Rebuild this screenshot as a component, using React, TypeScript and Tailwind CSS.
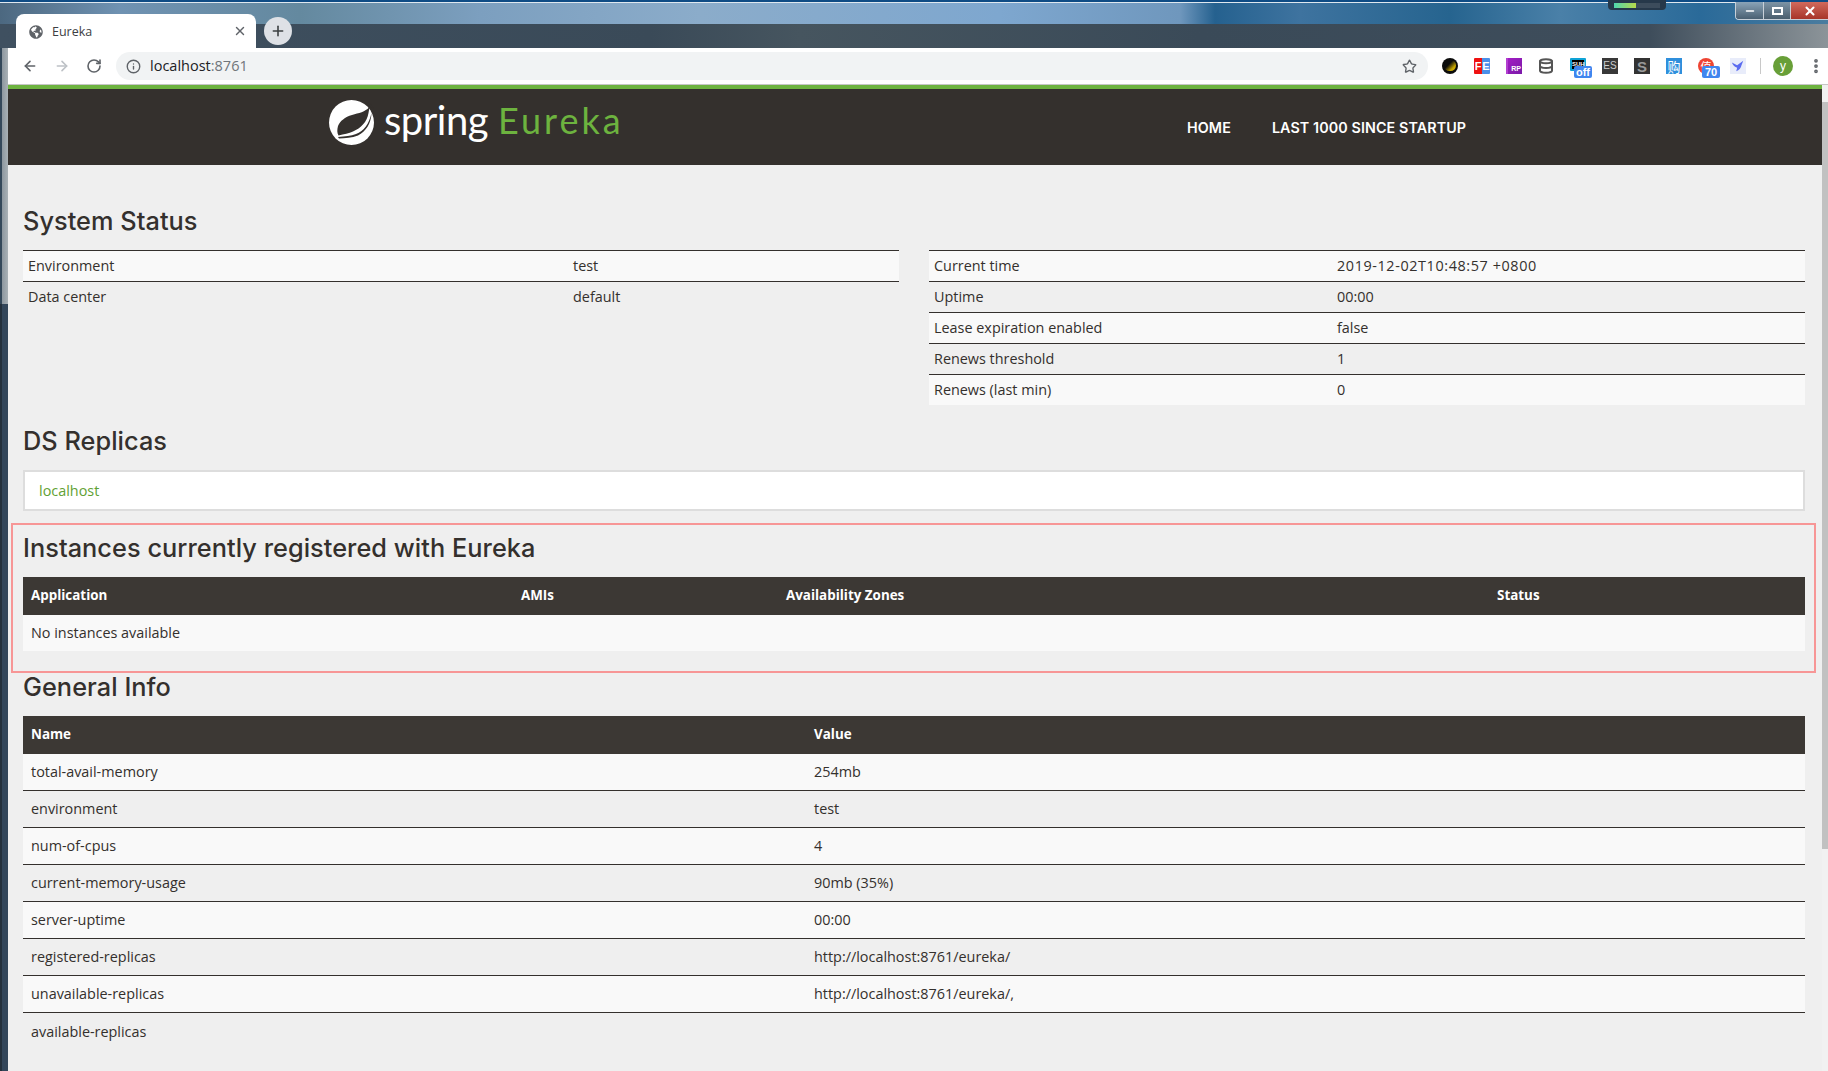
import React from "react";
import { ArrowLeft, ArrowRight, RotateCw, Info, Star, X, Plus, EllipsisVertical, Minus, Database } from "lucide-react";
import { FaGlobeAmericas } from "react-icons/fa";

const Ink = "text-[#34302d]";

function Badge({ children }: { children: React.ReactNode }) {
  return (
    <span className="absolute left-[4px] top-[8px] flex h-[12px] w-[18px] items-center justify-center rounded-[2px] bg-[#3f86ef] font-['Liberation_Sans',sans-serif] text-[11px] leading-none font-bold text-white">
      {children}
    </span>
  );
}

function Ext({ children }: { children: React.ReactNode }) {
  return (
    <div className="flex h-[36px] w-[32px] shrink-0 items-center justify-center">
      <div className="relative h-[16px] w-[16px]">{children}</div>
    </div>
  );
}

function Extensions() {
  return (
    <div className="ml-[6px] flex items-center">
      <Ext>
        <div className="h-[16px] w-[16px] rounded-full bg-[#0c0c0c] p-[2px]">
          <div className="h-[11px] w-[12px] rounded-full bg-[linear-gradient(135deg,#0c0c0c_40%,#c9a800_75%)]" />
        </div>
      </Ext>
      <Ext>
        <div className="flex h-[16px] w-[16px] overflow-hidden rounded-[1px] font-['Liberation_Sans',sans-serif] text-[11px] leading-[16px] font-bold text-white">
          <span className="w-[8px] bg-[#ee1111] text-center">F</span>
          <span className="w-[8px] bg-[#4a8fe8] text-center">E</span>
        </div>
      </Ext>
      <Ext>
        <div className="flex h-[16px] w-[16px] items-end justify-end border-l-2 border-[#b23fd0] bg-[linear-gradient(135deg,#a21cc4,#7a1aa8)] pr-[1px] font-['Liberation_Sans',sans-serif] text-[7px] leading-[10px] font-bold text-white">
          RP
        </div>
      </Ext>
      <Ext>
        <Database className="h-[16px] w-[16px] text-[#555]" strokeWidth={3} />
      </Ext>
      <Ext>
        <div className="h-[13px] w-[16px] rounded-[1px] border-[2px] border-[#0fa3d6] bg-black text-center font-['Liberation_Sans',sans-serif] text-[6px] leading-[9px] font-bold text-white">
          SUH
        </div>
        <Badge>off</Badge>
      </Ext>
      <Ext>
        <div className="flex h-[16px] w-[16px] items-center justify-center bg-[#383838] font-['Liberation_Sans',sans-serif] text-[10px] leading-none text-[#ccc]">
          ES
        </div>
      </Ext>
      <Ext>
        <div className="flex h-[16px] w-[16px] items-center justify-center bg-[#333] font-['Liberation_Sans',sans-serif] text-[15px] leading-none font-bold text-[#999]">
          S
        </div>
      </Ext>
      <Ext>
        <div className="flex h-[16px] w-[16px] items-center justify-center bg-[#2f8fdc] font-['Noto_Sans_CJK_SC',sans-serif] text-[13px] leading-none text-white">
          购
        </div>
      </Ext>
      <Ext>
        <div className="flex h-[16px] w-[16px] items-center justify-center rounded-full bg-[#ee4433] font-['Noto_Sans_CJK_SC',sans-serif] text-[11px] leading-none text-white">
          值
        </div>
        <Badge>70</Badge>
      </Ext>
      <Ext>
        <div className="flex h-[16px] w-[16px] items-center justify-center bg-[#e8ecfa]">
          <svg viewBox="0 0 16 16" className="h-[14px] w-[14px]">
            <path d="M1 4 L7 7 L14 2 L12 7 Q11 12 6 14 L7 10 Q3 9 1 4 Z" fill="#5b6cf0" />
          </svg>
        </div>
      </Ext>
    </div>
  );
}

function SpringLeaf() {
  return (
    <svg viewBox="0 0 45 45" className="h-[45px] w-[45px] shrink-0">
      <circle cx="22.5" cy="22.5" r="22.5" fill="#fff" />
      <path d="M36 2 L41 3 L45 9 L41 6.5 Z" fill="#34302d" />
      <path
        d="M40.5 7 C36 12 30 13 23 15 C16 17 11 21 9 26 C8 30 8 33 9.5 35.5 C15 34 20 33.5 24 31.5 C32 28 38 22 39.5 13 Z"
        fill="#34302d"
      />
      <path d="M9 37 C16 36 22 36 27 34 C35 31 40 24 42.5 13 C42 24 37 31 29 35.5 C23 38 16 38 10 38.5 Z" fill="#34302d" />
    </svg>
  );
}

function H2({ children, className = "" }: { children: React.ReactNode; className?: string }) {
  return (
    <h2 className={`flex items-center font-['Inter',sans-serif] text-[25.3px] leading-none font-medium tracking-[0.05px] ${Ink} ${className}`}>
      {children}
    </h2>
  );
}

function KV({ rows, first }: { rows: [string, string][]; first: string }) {
  return (
    <table className="w-[876px] table-fixed border-separate border-spacing-0">
      <tbody>
        {rows.map(([k, v], i) => (
          <tr key={k} className={i % 2 === 0 ? "bg-[#f9f9f9]" : ""}>
            <td className={`h-[31px] border-t border-[#34302d] pb-[1px] pl-[5px] ${first}`}>{k}</td>
            <td className={`h-[31px] border-t border-[#34302d] pb-[1px] pl-[5px] ${v.startsWith("2019") ? "tracking-[0.6px]" : ""}`}>{v}</td>
          </tr>
        ))}
      </tbody>
    </table>
  );
}

function Th({ children, w }: { children: React.ReactNode; w: string }) {
  return <th className={`h-[38px] bg-[#3c3834] pb-[2px] pl-[8px] text-left text-[13.4px] font-bold text-white ${w}`}>{children}</th>;
}

const info: [string, string][] = [
  ["total-avail-memory", "254mb"],
  ["environment", "test"],
  ["num-of-cpus", "4"],
  ["current-memory-usage", "90mb (35%)"],
  ["server-uptime", "00:00"],
  ["registered-replicas", "http://localhost:8761/eureka/"],
  ["unavailable-replicas", "http://localhost:8761/eureka/,"],
  ["available-replicas", ""],
];

export default function App() {
  return (
    <div className="flex h-[1071px] w-[1828px] flex-col overflow-hidden bg-[#2f3f50] font-['Open_Sans',sans-serif] text-[14.4px] text-[#34302d]">
      {/* window title strip */}
      <div className="relative h-[48px] shrink-0">
        <div className="h-[2px] bg-[#0f4c85]" />
        <div className="h-[1px] bg-[#dfe8ef]" />
        <div className="h-[21px] bg-[linear-gradient(90deg,#4c6880_0,#6f92b2_120px,#64899f_300px,#7c9fbf_480px,#8bacca_700px,#7ea7cf_1000px,#6f97bd_1180px,#25618f_1215px,#3e739f_1300px,#26648f_1450px,#4a80a8_1560px,#2a6a99_1700px,#4a7c9f_1828px)]" />
        <div className="h-[24px] bg-[linear-gradient(90deg,#3f5060_0,#3a4a58_650px,#46555f_800px,#3a4a58_1200px,#3e4d5b_1650px,#8c9499_1828px)]" />

        <div className="absolute top-[14px] left-[16px] flex h-[34px] w-[240px] items-center rounded-t-[8px] bg-white pt-[2px] pl-[13px]">
          <FaGlobeAmericas className="h-[14px] w-[14px] text-[#5f6368]" />
          <span className="ml-[9px] font-['Open_Sans',sans-serif] text-[12.5px] text-[#3c4043]">Eureka</span>
          <X className="absolute top-[10px] right-[9px] h-[14px] w-[14px] text-[#5f6368]" strokeWidth={2.4} />
        </div>
        <div className="absolute top-[17px] left-[264px] flex h-[28px] w-[28px] items-center justify-center rounded-full bg-[#dee1e6]">
          <Plus className="h-[16px] w-[16px] text-[#3c4043]" strokeWidth={2.4} />
        </div>

        <div className="absolute top-0 left-[1608px] flex h-[10px] w-[58px] items-center rounded-b-[4px] bg-[#26384a] pl-[6px]">
          <div className="h-[5px] w-[22px] bg-[linear-gradient(90deg,#4fd6b0,#b8d94a)]" />
          <div className="h-[5px] w-[24px] bg-[#3c4c5c]" />
        </div>
        <div className="absolute top-[2px] right-0 flex h-[18px] w-[93px] overflow-hidden rounded-bl-[4px] border-b border-l border-[#c8d0d8]">
          <div className="flex w-[28px] items-center justify-center border-r border-[#c8d0d8] bg-[linear-gradient(180deg,#8aa4b8,#4a6072)]">
            <Minus className="h-[12px] w-[12px] text-white" strokeWidth={3} />
          </div>
          <div className="flex w-[27px] items-center justify-center border-r border-[#c8d0d8] bg-[linear-gradient(180deg,#7d94a6,#4a5e6e)]">
            <div className="h-[8px] w-[11px] border-2 border-white" />
          </div>
          <div className="flex flex-1 items-center justify-center bg-[linear-gradient(180deg,#d06a5c,#a8352a)]">
            <X className="h-[14px] w-[14px] text-white" strokeWidth={3.5} />
          </div>
        </div>
      </div>

      <div className="flex min-h-0 flex-1">
        {/* window left frame */}
        <div className="flex w-[8px] shrink-0 flex-col">
          <div className="h-[256px] bg-[linear-gradient(90deg,#34485a_0,#34485a_2px,#8d979f_2px,#a9b1b6_100%)]" />
          <div className="flex-1 bg-[linear-gradient(90deg,#24303c_0,#24303c_2px,#33465a_2px)]" />
        </div>

        <div className="flex min-w-0 flex-1 flex-col bg-[#efefef]">
          {/* browser toolbar */}
          <div className="flex h-[37px] shrink-0 items-center border-b border-[#c6c6c6] bg-white">
            <div className="flex w-[108px] items-center pl-[14px]">
              <ArrowLeft className="h-[16px] w-[16px] text-[#5f6368]" strokeWidth={2.4} />
              <ArrowRight className="ml-[16px] h-[16px] w-[16px] text-[#bdc1c6]" strokeWidth={2.4} />
              <RotateCw className="ml-[16px] h-[16px] w-[16px] text-[#5f6368]" strokeWidth={2.4} />
            </div>
            <div className="flex h-[28px] w-[1312px] items-center rounded-full bg-[#f1f3f4] pl-[10px]">
              <Info className="h-[15px] w-[15px] text-[#5f6368]" strokeWidth={2.2} />
              <span className="mb-[1px] ml-[9px] font-['Open_Sans',sans-serif] text-[14.5px] text-[#202124]">
                localhost<span className="text-[#70757a]">:8761</span>
              </span>
              <Star className="mr-[11px] ml-auto h-[15px] w-[15px] text-[#5f6368]" strokeWidth={2.2} />
            </div>
            <Extensions />
            <div className="ml-[6px] h-[16px] w-[1px] bg-[#c8c8c8]" />
            <div className="ml-[12px] flex h-[20px] w-[20px] items-center justify-center rounded-full bg-[#689f38] font-['Liberation_Sans',sans-serif] text-[12px] text-white">
              y
            </div>
            <EllipsisVertical className="ml-[14px] h-[18px] w-[18px] text-[#5f6368]" strokeWidth={3} />
          </div>

          <div className="flex min-h-0 flex-1">
            <main className="min-w-0 flex-1">
              {/* spring nav */}
              <nav className="flex h-[80px] items-center border-t-[4px] border-[#6db33f] bg-[#34302d] pl-[321px] text-white">
                <div className="flex w-[858px] items-center pb-[10px]">
                  <SpringLeaf />
                  <span className="ml-[10px] pb-[4px] font-['Lato',sans-serif] text-[40px] leading-none font-normal tracking-[-0.5px]">spring</span>
                  <span className="ml-[10px] pb-[4px] font-['Lato',sans-serif] text-[36px] leading-none font-normal tracking-[3px] text-[#6db33f]">Eureka</span>
                </div>
                <div className="flex gap-[41px] pt-[1px] font-['Inter',sans-serif] text-[14.3px] font-semibold tracking-[0.1px] uppercase">
                  <span>Home</span>
                  <span>Last 1000 since startup</span>
                </div>
              </nav>

              <div className="pr-[17px] pl-[15px]">
                <H2 className="mt-[40px] mb-[15px] h-[30px] pt-[1px]">System Status</H2>
                <div className="flex gap-[30px]">
                  <div>
                    <KV
                      first="w-[545px]"
                      rows={[
                        ["Environment", "test"],
                        ["Data center", "default"],
                      ]}
                    />
                  </div>
                  <KV
                    first="w-[403px]"
                    rows={[
                      ["Current time", "2019-12-02T10:48:57 +0800"],
                      ["Uptime", "00:00"],
                      ["Lease expiration enabled", "false"],
                      ["Renews threshold", "1"],
                      ["Renews (last min)", "0"],
                    ]}
                  />
                </div>

                <H2 className="mt-[20px] mb-[15px] h-[30px] pt-[1px]">DS Replicas</H2>
                <div className="flex h-[41px] items-center border-2 border-[#ddd] bg-white pl-[14px] text-[#5fa134]">localhost</div>

                <section className="mt-[12px] -mr-[11px] -ml-[12px] border-2 border-[#f79696] pt-[7px] pr-[9px] pb-[20px] pl-[10px]">
                  <H2 className="mb-[15px] h-[30px] pt-[1px]">Instances currently registered with Eureka</H2>
                  <table className="w-full table-fixed border-separate border-spacing-0">
                    <thead>
                      <tr>
                        <Th w="w-[490px]">Application</Th>
                        <Th w="w-[265px]">AMIs</Th>
                        <Th w="w-[711px]">Availability Zones</Th>
                        <Th w="w-[316px]">Status</Th>
                      </tr>
                    </thead>
                    <tbody>
                      <tr className="bg-[#f9f9f9]">
                        <td colSpan={4} className="h-[36px] pl-[8px]">
                          No instances available
                        </td>
                      </tr>
                    </tbody>
                  </table>
                </section>

                <H2 className="mb-[19px] h-[24px] pt-[3px]">General Info</H2>
                <table className="w-full table-fixed border-separate border-spacing-0">
                  <thead>
                    <tr>
                      <Th w="w-[783px]">Name</Th>
                      <Th w="w-[999px]">Value</Th>
                    </tr>
                  </thead>
                  <tbody>
                    {info.map(([k, v], i) => {
                      const line = i < info.length - 1 ? "border-b border-[#34302d]" : "";
                      return (
                        <tr key={k} className={i % 2 === 0 ? "bg-[#f9f9f9]" : ""}>
                          <td className={`h-[37px] pl-[8px] ${line}`}>{k}</td>
                          <td className={`h-[37px] pl-[8px] ${line}`}>{v}</td>
                        </tr>
                      );
                    })}
                  </tbody>
                </table>
              </div>
            </main>

            {/* page scrollbar */}
            <div className="flex w-[6px] shrink-0 flex-col bg-[#f1f1f1]">
              <div className="h-[17px]" />
              <div className="h-[747px] bg-[#c1c1c1]" />
            </div>
          </div>
        </div>
      </div>
    </div>
  );
}
